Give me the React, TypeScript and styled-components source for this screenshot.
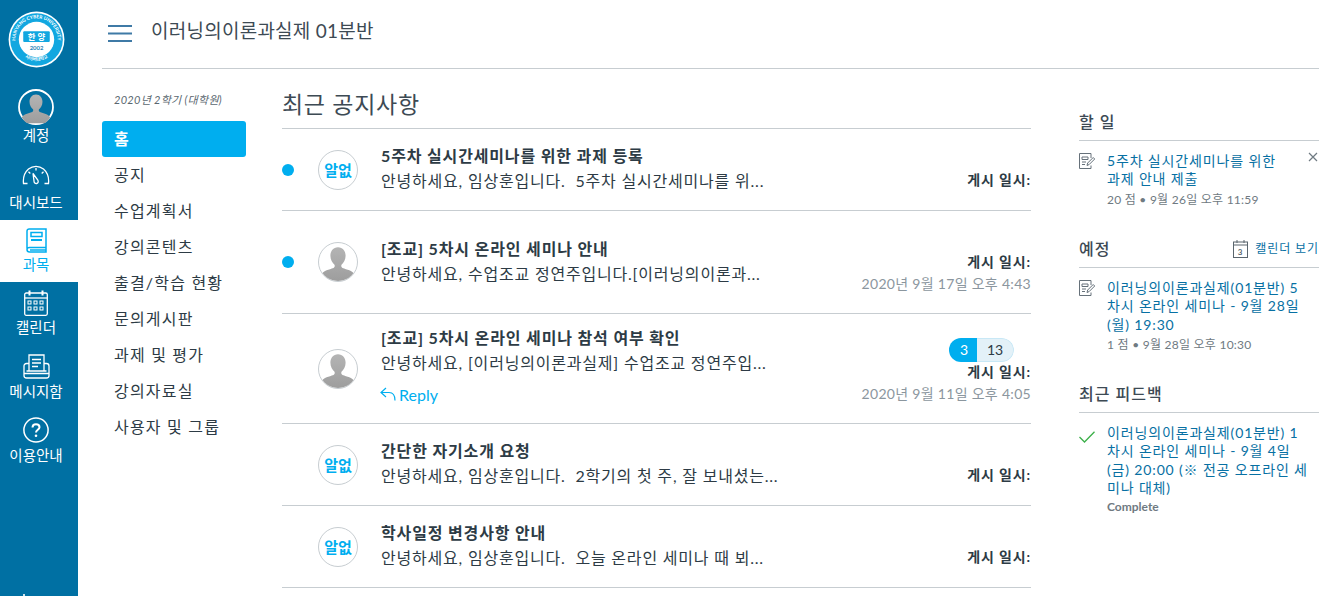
import React from "react";
import styled, { createGlobalStyle } from "styled-components";

const Global = createGlobalStyle`
  html, body { margin: 0; padding: 0; background: #fff; }
  body { font-family: Lato, "Noto Sans CJK KR", sans-serif; color: #2d3b45; overflow: hidden; }
  * { box-sizing: border-box; }
`;

const Page = styled.div`
  display: flex;
  height: 596px;
  overflow: hidden;
`;
const Nav = styled.nav`
  width: 78px;
  flex: none;
  background: #0070a3;
  display: flex;
  flex-direction: column;
  position: relative;
`;
const LogoWrap = styled.div`
  height: 89px;
  padding: 11px 0 0 8px;
`;
const NavItem = styled.div<{ $active?: boolean; $h: number; $pad: number }>`
  height: ${(p) => p.$h}px;
  padding: ${(p) => p.$pad}px 6px 0 0;
  background: ${(p) => (p.$active ? "#fff" : "transparent")};
  color: ${(p) => (p.$active ? "#00aeef" : "#fff")};
  display: flex;
  flex-direction: column;
  align-items: center;
`;
const NavIcon = styled.div<{ $h?: number }>`
  height: ${(p) => p.$h ?? 30}px;
  display: flex;
  align-items: center;
  justify-content: center;
`;
const NavLabel = styled.div<{ $gap?: number }>`
  font-size: 14.5px;
  line-height: 18px;
  margin-top: ${(p) => p.$gap ?? 1}px;
  white-space: nowrap;
`;
const NavTip = styled.div`
  position: absolute;
  left: 23px;
  bottom: 0;
  width: 2px;
  height: 2px;
  background: #cfe4ee;
`;
const Content = styled.div`
  flex: 1;
  min-width: 0;
  padding: 0 6px 0 24px;
`;
const Header = styled.header`
  height: 69px;
  border-bottom: 1px solid #c7cdd1;
  display: flex;
  align-items: center;
  padding: 0 0 0 6px;
`;
const CourseTitle = styled.h1`
  margin: 0 0 6px 19px;
  font-size: 19px;
  font-weight: 400;
  letter-spacing: 0.25px;
  color: #3d4a54;
  line-height: 24px;
`;
const Body = styled.div`
  display: flex;
`;
const Menu = styled.div`
  width: 144px;
  flex: none;
  margin-right: 36px;
  padding-top: 23px;
`;
const Term = styled.div`
  font-size: 11px;
  font-style: italic;
  line-height: 16px;
  letter-spacing: 0.3px;
  color: #5a6770;
  padding-left: 12px;
  margin-bottom: 13px;
  white-space: nowrap;
`;
const MenuItem = styled.div<{ $active?: boolean }>`
  height: 36px;
  line-height: 36px;
  padding-left: 12px;
  font-size: 16px;
  letter-spacing: 1.2px;
  border-radius: 3px;
  color: ${(p) => (p.$active ? "#fff" : "#2d3b45")};
  background: ${(p) => (p.$active ? "#00aeef" : "transparent")};
  font-weight: ${(p) => (p.$active ? 700 : 400)};
`;
const Main = styled.main`
  width: 749px;
  flex: none;
  margin-right: 48px;
`;
const Heading = styled.h2`
  margin: 0;
  height: 60px;
  padding-top: 20px;
  font-size: 23px;
  line-height: 30px;
  font-weight: 400;
  letter-spacing: 0.7px;
  color: #3d4a54;
  border-bottom: 1px solid #c7cdd1;
`;
const Row = styled.div`
  display: flex;
  min-height: 82px;
  border-bottom: 1px solid #c7cdd1;
`;
const DotCol = styled.div`
  width: 36px;
  flex: none;
  display: flex;
  align-items: center;
`;
const Dot = styled.span`
  width: 12px;
  height: 12px;
  border-radius: 50%;
  background: #00aeef;
`;
const AvatarCol = styled.div`
  width: 63px;
  flex: none;
  display: flex;
  align-items: center;
`;
const Avatar = styled.div`
  width: 40px;
  height: 40px;
  border-radius: 50%;
  border: 1px solid #c7cdd1;
  overflow: hidden;
  display: flex;
  align-items: center;
  justify-content: center;
  color: #00aeef;
  font-weight: 700;
  font-size: 15px;
  white-space: nowrap;
`;
const Text = styled.div`
  flex: 1;
  min-width: 0;
  align-self: center;
  padding-bottom: 3px;
`;
const RowTitle = styled.div`
  font-size: 16px;
  font-weight: 700;
  line-height: 25px;
  letter-spacing: 0.85px;
  white-space: pre;
  color: #2d3b45;
`;
const RowBody = styled.div`
  font-size: 16px;
  line-height: 25px;
  letter-spacing: 0.8px;
  white-space: pre;
  color: #2d3b45;
`;
const Reply = styled.div`
  display: flex;
  align-items: center;
  gap: 3px;
  margin-top: 8px;
  margin-bottom: 4px;
  margin-left: -1px;
  height: 22px;
  font-size: 16px;
  color: #00aeef;
`;
const Meta = styled.div<{ $top: number }>`
  flex: none;
  padding: ${(p) => p.$top}px 0 18px;
  display: flex;
  flex-direction: column;
  align-items: flex-end;
`;
const MetaLabel = styled.div`
  font-size: 14px;
  font-weight: 700;
  line-height: 20px;
  letter-spacing: 0.85px;
  white-space: nowrap;
`;
const MetaDate = styled.div`
  font-size: 14px;
  line-height: 23px;
  letter-spacing: 0.3px;
  color: #8b969e;
  white-space: nowrap;
`;
const Pill = styled.div`
  display: flex;
  height: 24px;
  margin-right: 17px;
  border-radius: 12px;
  overflow: hidden;
  font-size: 14px;
  line-height: 24px;
  text-align: center;
`;
const PillOn = styled.span`
  width: 28px;
  padding-left: 2px;
  background: #00aeef;
  color: #fff;
`;
const PillOff = styled.span`
  width: 37px;
  background: #e3f1f8;
  color: #2d3b45;
  border: 1px solid #c8e8f6;
  border-left: 0;
  border-radius: 0 12px 12px 0;
  line-height: 22px;
`;
const Aside = styled.aside`
  width: 240px;
  flex: none;
`;
const Section = styled.section<{ $top: number }>`
  padding-top: ${(p) => p.$top}px;
`;
const SectionHead = styled.div`
  display: flex;
  align-items: flex-end;
  justify-content: space-between;
  height: 33px;
  padding-bottom: 7px;
  border-bottom: 1px solid #c7cdd1;
`;
const SectionTitle = styled.h3`
  margin: 0;
  font-size: 16px;
  line-height: 22px;
  font-weight: 500;
  letter-spacing: 1px;
  color: #3d4a54;
`;
const CalLink = styled.div`
  display: flex;
  align-items: center;
  gap: 7px;
  font-size: 12px;
  line-height: 18px;
  color: #0770a3;
  margin-bottom: 2px;
  letter-spacing: 0.9px;
`;
const AsideItem = styled.div`
  display: flex;
  position: relative;
  padding-top: 11px;
`;
const ItemIcon = styled.div<{ $top: number }>`
  width: 28px;
  flex: none;
  padding-top: ${(p) => p.$top}px;
`;
const ItemText = styled.div`
  flex: 1;
  min-width: 0;
`;
const ItemLink = styled.div`
  font-size: 14px;
  line-height: 18.4px;
  letter-spacing: 0.85px;
  color: #0770a3;
  white-space: nowrap;
`;
const ItemMeta = styled.div<{ $bold?: boolean }>`
  font-size: 12px;
  line-height: 18px;
  margin-top: ${(p) => (p.$bold ? 0 : 2)}px;
  color: #6f7a82;
  letter-spacing: ${(p) => (p.$bold ? 0 : 0.25)}px;
  font-weight: ${(p) => (p.$bold ? 700 : 400)};
`;
const Close = styled.div`
  position: absolute;
  right: 1px;
  top: 11px;
  line-height: 0;
`;

const Logo = () => (
  <svg width="57" height="57" viewBox="0 0 58 58">
    <defs>
      <path id="ringTop" d="M10.400 39.750A21.500 21.500 0 1 1 47.600 39.750" />
      <path id="ringBottom" d="M11 41A21.500 21.500 0 0 0 47 41" />
    </defs>
    <circle cx="29" cy="29" r="28.400" fill="#fff" />
    <circle cx="29" cy="29" r="26.800" fill="#12a7e0" />
    <circle cx="29" cy="29" r="18" fill="#fff" />
    <text fontFamily="Lato, sans-serif" fontSize="4.800" fontWeight="700" fill="#fff">
      <textPath href="#ringTop" startOffset="50%" textAnchor="middle">HANYANG CYBER UNIVERSITY</textPath>
    </text>
    <text fontFamily="'Noto Sans CJK KR', sans-serif" fontSize="4.500" fontWeight="700" fill="#fff">
      <textPath href="#ringBottom" startOffset="50%" textAnchor="middle">사이버대학교</textPath>
    </text>
    <rect x="15.500" y="20.500" width="27" height="11" rx="1" fill="#12a7e0" />
    <text x="29" y="29.600" textAnchor="middle" fontFamily="'Noto Sans CJK KR', sans-serif" fontSize="8.500" fontWeight="700" fill="#fff">한 양</text>
    <text x="29" y="40" textAnchor="middle" fontFamily="Lato, sans-serif" fontSize="6" fontWeight="700" fill="#2a86b8">2002</text>
  </svg>
);

const UserSilhouette = ({ size }: { size: number }) => (
  <svg width={size} height={size} viewBox="0 0 40 40">
    <defs>
      <linearGradient id="silh" x1="0" y1="0" x2="0" y2="1">
        <stop offset="0" stopColor="#b4b4b4" />
        <stop offset="1" stopColor="#9b9b9b" />
      </linearGradient>
    </defs>
    <path d="M20 4.500c-5 0-8 4-8 9 0 4.200 2 7.600 4.300 9.300.6 1.400.3 2.600-1 3.400C10.500 28 5 28.500 2.500 33a20 20 0 0 0 35 0c-2.500-4.500-8-5-12.800-6.800-1.300-.8-1.600-2-1-3.400C26 21.100 28 17.700 28 13.500c0-5-3-9-8-9z" fill="url(#silh)" />
  </svg>
);

const AccountAvatar = () => (
  <svg width="36" height="36" viewBox="0 0 36 36">
    <circle cx="18" cy="18" r="17" fill="#0070a3" stroke="#fff" strokeWidth="1.800" />
    <g transform="translate(1.800 1.800) scale(.81)">
      <UserSilhouette size={40} />
    </g>
  </svg>
);

const GaugeIcon = () => (
  <svg width="28" height="20" viewBox="0 0 28 20" fill="none" stroke="#fff" strokeWidth="1.300">
    <path d="M5.500 18.500H1.500C.8 12 2.500 7.500 6.500 4c4.500-3.600 10.500-3.600 15 0 4 3.500 5.700 8 5 14.500h-4" />
    <path d="M11 8.500l4.800 6.500c.9 1.600.3 3.200-1.100 3.500-1.500.3-2.700-.9-2.700-2.600z" />
    <path d="M14 3v2.500M6.500 6.800l1.800 1.700M21.500 6.800l-1.800 1.700" />
  </svg>
);
const BookIcon = () => (
  <svg width="21" height="25" viewBox="0 0 21 25" fill="none" stroke="#00aeef" strokeWidth="1.500">
    <path d="M1 20.500V3a2.200 2.200 0 0 1 2.200-2H20v18.500H3.500C2 19.500 1 20 1 21.500S2 24 3.500 24H20v-4.500" />
    <rect x="5" y="4.500" width="11" height="4" />
    <path d="M5 12h11" strokeWidth="2" />
    <path d="M4 22h16" />
  </svg>
);
const CalendarIcon = () => (
  <svg width="24" height="26" viewBox="0 0 24 26" fill="none" stroke="#fff" strokeWidth="1.300">
    <rect x=".7" y="3" width="22.600" height="22.300" rx="1.500" />
    <path d="M.7 8h22.600" />
    <path d="M5.500 .5v5M18.500 .5v5" strokeWidth="2" />
    {[5, 11, 17].map((x) =>
      [11, 17].map((y) => <rect key={`${x}-${y}`} x={x - 1} y={y} width="3" height="3" strokeWidth="1" />)
    )}
  </svg>
);
const InboxIcon = () => (
  <svg width="27" height="25" viewBox="0 0 27 25" fill="none" stroke="#fff" strokeWidth="1.300">
    <path d="M6 17V1h15v16" />
    <path d="M9 5.500h9M9 9h9M9 12.500h6" />
    <path d="M6 9.500H3.500C2 9.500 1 10.500 1 12v9.500C1 23 2 24 3.500 24h20c1.500 0 2.500-1 2.500-2.500V12c0-1.500-1-2.500-2.500-2.500H21" />
    <path d="M1 19.500h25M3.500 17h20" />
  </svg>
);
const HelpIcon = () => (
  <svg width="26" height="26" viewBox="0 0 26 26" fill="none">
    <circle cx="13" cy="13" r="12.100" stroke="#fff" strokeWidth="1.500" />
    <path d="M9.500 10.500c0-2 1.500-3.300 3.500-3.300s3.500 1.300 3.500 3c0 2.500-3.500 2.700-3.500 5.300" stroke="#fff" strokeWidth="2" />
    <circle cx="13" cy="18.800" r="1.300" fill="#fff" />
  </svg>
);
const Hamburger = () => (
  <svg width="24" height="18" viewBox="0 0 24 18" stroke="#3f7aa6" strokeWidth="2">
    <path d="M0 1h24M0 8.500h24M0 16h24" />
  </svg>
);
const AssignIcon = () => (
  <svg width="16" height="16" viewBox="0 0 16 16" fill="none" stroke="#66717a" strokeWidth="1">
    <path d="M12 5V.5H.5v15H12v-3" />
    <path d="M3 4h6v2.500H3zM3 9h4M3 11.500h3" />
    <path d="M8 12.500l.7-2.500 5.500-5.500 1.500 1.500-5.500 5.500z" />
  </svg>
);
const CloseIcon = () => (
  <svg width="10" height="10" viewBox="0 0 10 10" stroke="#6f7a82" strokeWidth="1.200">
    <path d="M1 1l8 8M9 1l-8 8" />
  </svg>
);
const SmallCalendar = () => (
  <svg width="15" height="18" viewBox="0 0 15 18" fill="none" stroke="#5a656d" strokeWidth="1">
    <rect x=".5" y="2" width="14" height="15.500" />
    <path d="M.5 5h14M4 0v3M11 0v3" />
    <text x="7.500" y="14.500" textAnchor="middle" fontSize="8" fontFamily="Lato, sans-serif" fontWeight="700" fill="#5a656d" stroke="none">3</text>
  </svg>
);
const CheckIcon = () => (
  <svg width="16" height="12" viewBox="0 0 16 12" fill="none" stroke="#3cb04a" strokeWidth="1.300">
    <path d="M.5 6l5 5L15.500 .7" />
  </svg>
);
const ReplyIcon = () => (
  <svg width="16" height="16" viewBox="0 0 16 16" fill="none" stroke="#00aeef" strokeWidth="1.200">
    <path d="M6 2L1 6.500 6 11" />
    <path d="M1 6.500h8c3.500 0 6 2.500 6 8" />
  </svg>
);

const menu = ["공지", "수업계획서", "강의콘텐츠", "출결/학습 현황", "문의게시판", "과제 및 평가", "강의자료실", "사용자 및 그룹"];

type Ann = {
  title: string;
  body: string;
  unread?: boolean;
  person?: boolean;
  date?: string;
  reply?: boolean;
  pill?: boolean;
};
const anns: Ann[] = [
  { title: "5주차 실시간세미나를 위한 과제 등록", body: "안녕하세요, 임상훈입니다.  5주차 실시간세미나를 위...", unread: true },
  { title: "[조교] 5차시 온라인 세미나 안내", body: "안녕하세요, 수업조교 정연주입니다.[이러닝의이론과...", unread: true, person: true, date: "2020년 9월 17일 오후 4:43" },
  { title: "[조교] 5차시 온라인 세미나 참석 여부 확인", body: "안녕하세요, [이러닝의이론과실제] 수업조교 정연주입...", person: true, date: "2020년 9월 11일 오후 4:05", reply: true, pill: true },
  { title: "간단한 자기소개 요청", body: "안녕하세요, 임상훈입니다.  2학기의 첫 주, 잘 보내셨는..." },
  { title: "학사일정 변경사항 안내", body: "안녕하세요, 임상훈입니다.  오늘 온라인 세미나 때 뵈..." },
];

export default function App() {
  return (
    <Page>
      <Global />
      <Nav>
        <LogoWrap><Logo /></LogoWrap>
        <NavItem $h={69} $pad={0}>
          <NavIcon $h={36}><AccountAvatar /></NavIcon>
          <NavLabel $gap={2}>계정</NavLabel>
        </NavItem>
        <NavItem $h={62} $pad={2}>
          <NavIcon><GaugeIcon /></NavIcon>
          <NavLabel $gap={4}>대시보드</NavLabel>
        </NavItem>
        <NavItem $active $h={62} $pad={5}>
          <NavIcon><BookIcon /></NavIcon>
          <NavLabel>과목</NavLabel>
        </NavItem>
        <NavItem $h={64} $pad={6}>
          <NavIcon><CalendarIcon /></NavIcon>
          <NavLabel>캘린더</NavLabel>
        </NavItem>
        <NavItem $h={64} $pad={5}>
          <NavIcon><InboxIcon /></NavIcon>
          <NavLabel $gap={2}>메시지함</NavLabel>
        </NavItem>
        <NavItem $h={64} $pad={5}>
          <NavIcon><HelpIcon /></NavIcon>
          <NavLabel $gap={2}>이용안내</NavLabel>
        </NavItem>
        <NavTip />
      </Nav>
      <Content>
        <Header>
          <Hamburger />
          <CourseTitle>이러닝의이론과실제 01분반</CourseTitle>
        </Header>
        <Body>
          <Menu>
            <Term>2020년 2학기 (대학원)</Term>
            <MenuItem $active>홈</MenuItem>
            {menu.map((m) => <MenuItem key={m}>{m}</MenuItem>)}
          </Menu>
          <Main>
            <Heading>최근 공지사항</Heading>
            {anns.map((a) => (
              <Row key={a.title}>
                <DotCol>{a.unread && <Dot />}</DotCol>
                <AvatarCol>
                  <Avatar>{a.person ? <UserSilhouette size={38} /> : "알없"}</Avatar>
                </AvatarCol>
                <Text>
                  <RowTitle>{a.title}</RowTitle>
                  <RowBody>{a.body}</RowBody>
                  {a.reply && <Reply><ReplyIcon />Reply</Reply>}
                </Text>
                <Meta $top={a.pill ? 24 : 41}>
                  {a.pill && <Pill><PillOn>3</PillOn><PillOff>13</PillOff></Pill>}
                  <MetaLabel>게시 일시:</MetaLabel>
                  {a.date && <MetaDate>{a.date}</MetaDate>}
                </Meta>
              </Row>
            ))}
          </Main>
          <Aside>
            <Section $top={39}>
              <SectionHead><SectionTitle>할 일</SectionTitle></SectionHead>
              <AsideItem>
                <ItemIcon $top={1}><AssignIcon /></ItemIcon>
                <ItemText>
                  <ItemLink>5주차 실시간세미나를 위한<br />과제 안내 제출</ItemLink>
                  <ItemMeta>20 점 • 9월 26일 오후 11:59</ItemMeta>
                </ItemText>
                <Close><CloseIcon /></Close>
              </AsideItem>
            </Section>
            <Section $top={26}>
              <SectionHead>
                <SectionTitle>예정</SectionTitle>
                <CalLink><SmallCalendar />캘린더 보기</CalLink>
              </SectionHead>
              <AsideItem>
                <ItemIcon $top={1}><AssignIcon /></ItemIcon>
                <ItemText>
                  <ItemLink>이러닝의이론과실제(01분반) 5<br />차시 온라인 세미나 - 9월 28일<br />(월) 19:30</ItemLink>
                  <ItemMeta>1 점 • 9월 28일 오후 10:30</ItemMeta>
                </ItemText>
              </AsideItem>
            </Section>
            <Section $top={26}>
              <SectionHead><SectionTitle>최근 피드백</SectionTitle></SectionHead>
              <AsideItem>
                <ItemIcon $top={3}><CheckIcon /></ItemIcon>
                <ItemText>
                  <ItemLink>이러닝의이론과실제(01분반) 1<br />차시 온라인 세미나 - 9월 4일<br />(금) 20:00 (※ 전공 오프라인 세<br />미나 대체)</ItemLink>
                  <ItemMeta $bold>Complete</ItemMeta>
                </ItemText>
              </AsideItem>
            </Section>
          </Aside>
        </Body>
      </Content>
    </Page>
  );
}
